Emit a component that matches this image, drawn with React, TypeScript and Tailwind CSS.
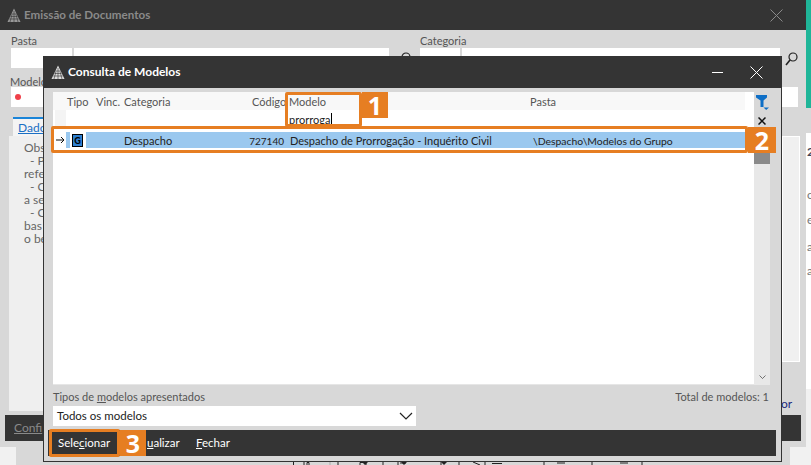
const Logo = ({ c }: { c: string }) => (
  <svg width="14" height="15" viewBox="0 0 14 15" className="shrink-0">
    <path d="M7 0.5L13.5 14H0.5Z" fill={c} />
    <path d="M4.5 6H9.5M3.5 8.5H10.5M2.3 11H11.7M7 3V14M5 6.5L3 14M9 6.5L11 14" stroke="#343434" strokeWidth="0.6" fill="none" />
  </svg>
);

const XIcon = ({ c, s = 13 }: { c: string; s?: number }) => (
  <svg width={s} height={s} viewBox="0 0 13 13" className="shrink-0">
    <path d="M0.5 0.5L12.5 12.5M12.5 0.5L0.5 12.5" stroke={c} strokeWidth="1" fill="none" />
  </svg>
);

const SmallX = () => (
  <svg width="8" height="8" viewBox="0 0 8 8" className="shrink-0">
    <path d="M0.5 0.5L7.5 7.5M7.5 0.5L0.5 7.5" stroke="#111" strokeWidth="1.5" fill="none" />
  </svg>
);

const Search = () => (
  <svg width="13" height="14" viewBox="0 0 13 14" className="shrink-0">
    <circle cx="8" cy="5" r="4" stroke="#222" strokeWidth="1.2" fill="none" />
    <path d="M5 8L1 13" stroke="#222" strokeWidth="1.6" />
  </svg>
);

const Chevron = ({ w = 14, h = 8 }: { w?: number; h?: number }) => (
  <svg width={w} height={h} viewBox="0 0 14 8" className="shrink-0">
    <path d="M1 1L7 7L13 1" stroke="#222" strokeWidth="1.2" fill="none" />
  </svg>
);

const Filter = () => (
  <svg width="13" height="15" viewBox="0 0 13 15" className="shrink-0">
    <path d="M0 0H11V2.5L7.5 5.5V12H4.5V5.5L0 2.5Z" fill="#0f6fc6" />
    <path d="M7.5 12.5H13L10.2 15Z" fill="#0f6fc6" />
  </svg>
);

const ToolbarTops = () => (
  <svg width="380" height="4" viewBox="0 0 380 4" className="mt-[14px] ml-[260px] block">
    <path d="M17.5 4V0.5H28V4M31 4V1.5H33V4M62 4V0M80 0.5L85 0.5M84 4V1.5H90V4M107 4V0.5H122V4M124 2H130M165 4V0M172 0.5H183V4M197 1L204 4M209 4V0M216 2.5H226M268 4V0M281 2H289M303 0.5H316V4M344 2H352M366 4V0.5H378" stroke="#222" fill="none" />
    <path d="M40 0.5H54V4M130 0.5H130" stroke="#aaa" fill="none" />
    <path d="M85 0H93L89 4ZM124 0H132L128 4ZM164 0H172L168 4Z" fill="#222" />
  </svg>
);

const Badge = ({ n, className }: { n: string; className: string }) => (
  <div className={`absolute bg-[#e67e22] text-white font-bold text-[25px] leading-none flex items-center justify-center font-['Open_Sans',sans-serif] ${className}`}>{n}</div>
);

const Ring = "absolute border-[3px] border-[#e67e22] rounded-[2px]";

export default function App() {
  return (
    <div className="relative w-[811px] h-[465px] overflow-hidden bg-[#f1f1f1] font-['Lato','Open_Sans',sans-serif] text-[11px] text-[#555] flex">
      {/* background window */}
      <div className="w-[806px] shrink-0 flex flex-col">
        <div className="h-[447px] bg-[#d8d8d8] flex flex-col">
          <div className="h-[30px] bg-[#343434] flex items-center pl-[7px] pr-[23px] gap-[3px] shrink-0">
            <Logo c="#999" />
            <span className="text-[11.6px] font-bold text-[#8a8a8a]">Emissão de Documentos</span>
            <div className="flex-1" />
            <XIcon c="#8a8a8a" />
          </div>
          <div className="flex pl-[11px] pt-[4px] h-[47px] shrink-0">
            <div className="flex flex-col w-[378px]">
              <span className="leading-[14px] h-[14px]">Pasta</span>
              <div className="flex gap-[2px] h-[20px]">
                <div className="w-[61px] bg-white" />
                <div className="flex-1 bg-white" />
              </div>
            </div>
            <div className="w-[31px] pt-[18px] pl-[9px]"><Search /></div>
            <div className="flex flex-col w-[360px]">
              <span className="leading-[14px] h-[14px]">Categoria</span>
              <div className="flex gap-[2px] h-[20px]">
                <div className="w-[40px] bg-white" />
                <div className="flex-1 bg-white" />
              </div>
            </div>
            <div className="pt-[18px] pl-[5px]"><Search /></div>
          </div>
          <div className="pl-[10px] leading-[10px] h-[10px]">Modelo</div>
          <div className="ml-[11px] mr-[8px] h-[20px] bg-white flex items-center pl-[4px] shrink-0">
            <div className="w-[6px] h-[6px] rounded-full bg-[#f0404a]" />
          </div>
          <div className="ml-[13px] mt-[10px] w-[40px] h-[19px] bg-[#f4f4f4] border-t-[2px] border-[#1a84d8] text-[#1a6fc4] text-[12px] pl-[5px] shrink-0">
            <span className="underline">Dados</span>
          </div>
          <div className="flex h-[275px] shrink-0">
            <div className="ml-[9px] w-[760px] bg-[#efefef] pl-[15px] pt-[5px] text-[12px] leading-[13px] text-[#666] flex flex-col">
              <span>Obs</span>
              <span className="pl-[6px]">- P</span>
              <span>refe</span>
              <span className="pl-[6px]">- O</span>
              <span>a se</span>
              <span className="pl-[6px]">- O</span>
              <span>bas</span>
              <span>o be</span>
            </div>
            <div className="ml-[13px] w-[18px] h-[226px] bg-[#f0f0f0] border border-white" />
          </div>
          <div className="flex h-[26px] mt-[4px] shrink-0">
            <div className="ml-[5px] w-[745px] bg-[#343434] flex items-center pl-[9px] text-[12px] text-[#8a8a8a]">
              <span className="underline">Confi</span>
            </div>
            <div className="ml-[31px] w-[20px] bg-[#343434]" />
          </div>
          <div className="ml-[25px] mt-[6px] w-[15px] h-px bg-[#444]" />
        </div>
        <div className="ml-[16px] w-[774px] h-[18px] bg-[#d8d8d8] overflow-hidden">
          <ToolbarTops />
        </div>
      </div>

      {/* clipped edge of the page behind the window */}
      <div className="w-[5px] shrink-0 flex flex-col overflow-hidden">
        <div className="h-[108px] bg-[#1fb598] shrink-0" />
        <div className="h-[25px] bg-[#d8d8d8] shrink-0" />
        <div className="h-[256px] bg-white shrink-0 text-[12px] leading-[13px] text-[#777] pl-[1px] pt-[12px] flex flex-col whitespace-nowrap">
          <span className="font-bold text-[#445]">2</span>
          <span className="mt-[30px]">o</span>
          <span className="mt-[12px]">e</span>
          <span className="mt-[14px]">a</span>
          <span className="mt-[11px]">a</span>
        </div>
      </div>
      <span className="absolute left-[781px] top-[395px] text-[12px] text-[#1a2a80]">or</span>

      {/* modal */}
      <div className="absolute left-[43px] top-[56px] w-[739px] h-[406px] bg-[#d8d8d8] border-x border-b border-[#333] flex flex-col">
        <div className="h-[32px] bg-[#343434] flex items-center pl-[7px] pr-[18px] gap-[3px] shrink-0">
          <Logo c="#ddd" />
          <span className="text-[12px] font-bold text-white">Consulta de Modelos</span>
          <div className="flex-1" />
          <div className="w-[11px] h-px bg-white mr-[24px]" />
          <XIcon c="#fff" />
        </div>
        <div className="flex pt-[4px] pl-[9px] shrink-0">
          <div className="w-[701px] bg-white flex flex-col h-[293px] border-b border-[#e6e6e6]">
            <div className="h-[18px] w-[692px] bg-[#f8f8f8] leading-[20px] flex pl-[14px]">
              <span className="w-[29px]">Tipo</span>
              <span className="w-[28px]">Vinc.</span>
              <span className="w-[128px]">Categoria</span>
              <span className="w-[37px]">Código</span>
              <span className="w-[241px]">Modelo</span>
              <span>Pasta</span>
            </div>
            <div className="h-[18px] flex text-[#222] leading-[20px]">
              <div className="ml-[2px] w-[11px] bg-[#f4f4f4]" />
              <div className="ml-[223px]">prorroga<span className="border-l border-black ml-[1px]" /></div>
            </div>
            <div className="mt-[4px] h-[16px] flex items-center text-[#222]">
              <div className="w-[13px] flex items-center justify-center pl-[2px]">
                <svg width="9" height="8" viewBox="0 0 9 8"><path d="M0 4H8M5 1L8 4L5 7" stroke="#111" fill="none" /></svg>
              </div>
              <div className="w-[679px] h-full bg-[#9ac8ef] flex items-center leading-[18px]">
                <div className="ml-[4px] w-[16px] h-full bg-white flex items-center pl-[2px]">
                  <div className="w-[11px] h-[13px] bg-[#2f80d0] border border-black flex items-center justify-center text-[9px] font-black text-black leading-none">G</div>
                </div>
                <span className="ml-[38px] w-[125px] pt-[1px]">Despacho</span>
                <span className="w-[35px] text-right text-[10px] pt-[1px]">727140</span>
                <span className="ml-[6px] w-[243px] pt-[1px]">Despacho de Prorrogação - Inquérito Civil</span>
                <span className="pt-[1px] text-[10.4px]">\Despacho\Modelos do Grupo</span>
              </div>
            </div>
          </div>
          <div className="w-[16px] flex flex-col items-center h-[293px] bg-[#e8e8e8]">
            <div className="w-full bg-[#d8d8d8] h-[38px] flex flex-col items-center pt-[3px] gap-[7px]">
              <Filter />
              <SmallX />
            </div>
            <div className="w-full h-[13px] bg-[#8a8a8a] mt-[21px]" />
            <div className="flex-1" />
            <div className="h-[16px] flex items-center justify-center"><Chevron w={7} h={4} /></div>
          </div>
        </div>
        <div className="flex justify-between pl-[9px] pr-[12px] leading-[14px] mt-[5px]">
          <span>Tipos de <span className="underline">m</span>odelos apresentados</span>
          <span>Total de modelos: 1</span>
        </div>
        <div className="ml-[9px] mt-[2px] w-[363px] h-[20px] bg-white text-[#222] text-[11.5px] flex items-center justify-between pl-[4px] pr-[3px] shrink-0">
          <span>Todos os modelos</span>
          <Chevron />
        </div>
        <div className="ml-[4px] mr-[5px] mt-[4px] h-[26px] bg-[#343434] flex items-center text-[11.5px] text-white shrink-0">
          <div className="ml-[1px] -my-px w-[71px] h-[28px] border-[3px] border-[#e67e22] rounded-[2px] flex items-center pl-[6px]">
            <span>Sele<span className="underline">c</span>ionar</span>
          </div>
          <span className="ml-[27px] w-[49px]"><span className="underline">u</span>alizar</span>
          <span><span className="underline">F</span>echar</span>
        </div>
      </div>

      {/* annotations */}
      <div className={`${Ring} left-[285px] top-[92px] w-[77px] h-[35px]`} />
      <Badge n="1" className="left-[362px] top-[92px] w-[26px] h-[26px]" />
      <div className={`${Ring} left-[51px] top-[126px] w-[697px] h-[27px]`} />
      <Badge n="2" className="left-[748px] top-[127px] w-[28px] h-[26px]" />
      <Badge n="3" className="left-[120px] top-[430px] w-[26px] h-[26px]" />
    </div>
  );
}
